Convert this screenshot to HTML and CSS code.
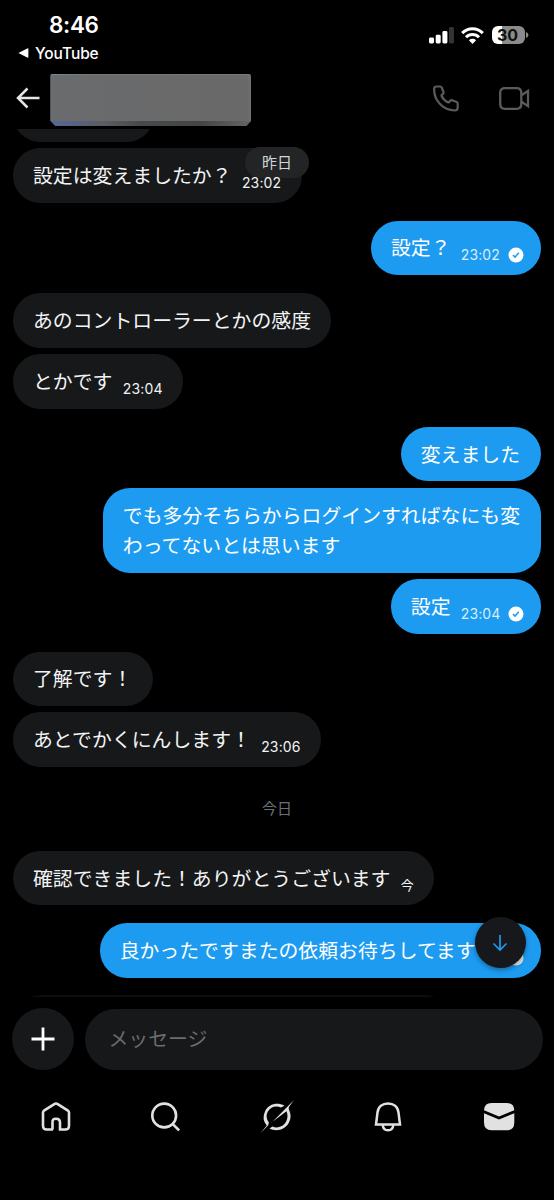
FILE: index.html
```html
<!DOCTYPE html>
<html lang="ja">
<head>
<meta charset="utf-8">
<title>メッセージ</title>
<link rel="stylesheet" href="styles.css">
</head>
<body>
<div class="screen">
  <div class="status">
    <div class="status-left">
      <div class="clock">8:46</div>
      <div class="back-app"><svg width="11" height="10" viewBox="0 0 11 10"><path d="M.4 5 9.2.5Q10.4 0 10.4 1.200v7.600Q10.400 10 9.200 9.500z" fill="#fff"/></svg><span>YouTube</span></div>
    </div>
    <div class="status-right">
      <svg class="signal" width="25" height="17" viewBox="0 0 25 17"><g fill="#fff"><rect x="0" y="10.500" width="5" height="6" rx="1.400"/><rect x="6.700" y="7.700" width="5" height="8.800" rx="1.400"/><rect x="13.400" y="4" width="5" height="12.500" rx="1.400"/></g><rect x="20" y="0" width="5" height="16.500" rx="1.400" fill="#333"/></svg>
      <svg class="wifi" width="23" height="17" viewBox="0 0 23 17"><g fill="none" stroke="#fff" stroke-width="3"><path d="M1.200 6.100a14.600 14.600 0 0 1 20.600 0"/><path d="M5 10.300a9.200 9.200 0 0 1 13 0"/></g><path d="M11.500 17 7.900 13.300a5.100 5.100 0 0 1 7.200 0z" fill="#fff"/></svg>
      <div class="battery"><span>30</span></div>
      <svg class="battery-tip" width="3" height="6" viewBox="0 0 3 6"><path d="M0 0Q2.500 1 2.500 3T0 6z" fill="#8b8b8b"/></svg>
    </div>
  </div>

  <header class="header">
    <svg class="back" width="24" height="22" viewBox="0 0 24 22"><path d="M11.500 1.500 2 11l9.500 9.500M2 11h21.500" fill="none" stroke="#e4e5e6" stroke-width="2.500"/></svg>
    <div class="name-mask"></div>
    <svg class="phone" width="26" height="27" viewBox="0 0 26 27"><path d="M3.100 1.500H7.200Q8.300 1.500 8.700 2.500L10.500 7Q10.900 8.200 10 9L8.600 10.200Q8.400 10.500 8.600 11C9.800 13.800 12.200 16.100 15.200 17.400Q15.700 17.500 16 17.200L17.200 15.700Q18 14.900 19.100 15.300L23.700 17.100Q24.700 17.600 24.700 18.700V22.500Q24.600 25.500 21.700 25.500C10 25.100 1.100 16 1.100 4Q1.100 1.800 3.100 1.500Z" fill="none" stroke="#5b5b5b" stroke-width="2.200" stroke-linejoin="round"/></svg>
    <svg class="video" width="31" height="23" viewBox="0 0 31 23"><path d="M6 1.200H17.500Q22.300 1.200 22.300 6V17Q22.300 21.800 17.500 21.800H6Q1.200 21.800 1.200 17V6Q1.200 1.200 6 1.200ZM22.500 8.300 29 3.900V19.100L22.500 14.700" fill="none" stroke="#5b5b5b" stroke-width="2.300"/></svg>
  </header>

  <main class="chat">
    <div class="bubble in earlier"></div>
    <div class="bubble in dated"><p>設定は変えましたか？</p><time>23:02</time><span class="date-pill">昨日</span></div>
    <div class="bubble out turn"><p>設定？</p><time>23:02</time><svg class="check" viewBox="0 0 16 16"><circle cx="8" cy="8" r="7.500" fill="#fff"/><path d="m5 8.100 2.100 2 3.700-4.300" fill="none" stroke="#1d9bf0" stroke-width="1.500"/></svg></div>
    <div class="bubble in turn"><p>あのコントローラーとかの感度</p></div>
    <div class="bubble in"><p>とかです</p><time>23:04</time></div>
    <div class="bubble out turn"><p>変えました</p></div>
    <div class="bubble out"><p>でも多分そちらからログインすればなにも変<br>わってないとは思います</p></div>
    <div class="bubble out"><p>設定</p><time>23:04</time><svg class="check" viewBox="0 0 16 16"><circle cx="8" cy="8" r="7.500" fill="#fff"/><path d="m5 8.100 2.100 2 3.700-4.300" fill="none" stroke="#1d9bf0" stroke-width="1.500"/></svg></div>
    <div class="bubble in turn"><p>了解です！</p></div>
    <div class="bubble in"><p>あとでかくにんします！</p><time>23:06</time></div>
    <div class="day">今日</div>
    <div class="bubble in"><p>確認できました！ありがとうございます</p><time class="now">今</time></div>
    <div class="bubble out turn last"><p>良かったですまたの依頼お待ちしてます</p><svg class="check" viewBox="0 0 16 16"><circle cx="8" cy="8" r="7.500" fill="#e6e9ea"/></svg>
      <div class="jump"><svg width="16" height="18" viewBox="0 0 16 18"><path d="M8 1v15M1.500 9.500 8 16l6.500-6.500" fill="none" stroke="#1d9bf0" stroke-width="1.700"/></svg></div>
    </div>
    <div class="bubble in next"></div>
  </main>

  <div class="composer">
    <div class="plus"><svg width="24" height="24" viewBox="0 0 24 24"><path d="M12 .5v23M.5 12h23" stroke="#fff" stroke-width="2.800"/></svg></div>
    <div class="field">メッセージ</div>
  </div>

  <nav class="tabs">
    <svg width="34" height="34" viewBox="0 0 34 34"><path d="M14 29.500H7.800Q4 29.500 4 25.700V12.600Q4 11.400 5 10.700L15.300 4.100Q17 3 18.700 4.100L29 10.700Q30 11.400 30 12.600V25.700Q30 29.500 26.200 29.500H21V22.500Q21 18.700 17 18.700T13.500 22.500V29.500" fill="none" stroke="#e1e1e1" stroke-width="2.600"/></svg>
    <svg width="34" height="34" viewBox="0 0 34 34"><circle cx="15.200" cy="15.500" r="11.900" fill="none" stroke="#e1e1e1" stroke-width="2.600"/><path d="m23.800 24.100 6.300 6.300" stroke="#e1e1e1" stroke-width="2.700"/></svg>
    <svg width="34" height="34" viewBox="0 0 34 34"><g fill="#e1e1e1"><path d="M.2 33.600 6.700 25.500Q1.400 19 5 11.400C8.500 3.900 17.200 1.800 24.500 5.700L20.900 7.400C15.500 5.100 10 7 7.600 12Q5 17.700 8.900 22.600L8.200 25.300z"/><path d="M33.800.3 12.500 21.700 26.500 11.300C29.600 18.100 25.400 27.100 17 27.400 15.200 27.400 13.700 27.200 12.400 26.600L9.500 28.500C16.200 32 24.900 29.900 28.700 23 31.100 18.500 31.300 14.500 29 9.700 28.500 7.900 28.800 7.200 29.300 6.400z"/></g></svg>
    <svg width="34" height="34" viewBox="0 0 34 34"><path d="M5 24.500 6.500 12.500C7.200 6.500 11.500 3.400 17 3.400S26.800 6.500 27.500 12.500L29 24.500ZM11.700 25C12 28.500 14 30.300 17 30.300S22 28.500 22.300 25" fill="none" stroke="#e1e1e1" stroke-width="2.500"/></svg>
    <svg width="34" height="34" viewBox="0 0 34 34"><g fill="#e1e1e1"><path d="M2 10.300Q2.300 3 9.500 3H25Q32 3 32.300 10.300L17 16.500z"/><path d="M2 13.200 17 19.600 32.300 13.200V22.500Q32.300 30.300 25 30.300H9.500Q2 30.300 2 22.500z"/></g></svg>
  </nav>
</div>
</body>
</html>
```
FILE: styles.css
```css
* { box-sizing: border-box; }
body { margin: 0; background: #000; }
p { margin: 0; }
svg { display: block; flex: none; }

.screen {
  display: flex;
  flex-direction: column;
  width: 554px;
  height: 1200px;
  overflow: hidden;
  background: #000;
  color: #f2f3f4;
  font-family: Inter, "Noto Sans CJK JP", sans-serif;
}

.status {
  display: flex;
  justify-content: space-between;
  height: 66px;
  padding: 12px 25px 0 18px;
  color: #fff;
}
.clock {
  padding-left: 31px;
  font-size: 22.500px;
  font-weight: 600;
  line-height: 26px;
  letter-spacing: -0.350px;
}
.back-app {
  display: flex;
  align-items: center;
  gap: 6px;
  height: 20px;
  margin-top: 5px;
  font-size: 15.500px;
  font-weight: 500;
  letter-spacing: -0.100px;
}
.status-right {
  display: flex;
  align-items: center;
  height: 18px;
  margin-top: 14px;
}
.signal { margin-right: 7px; }
.wifi { margin-right: 8px; }
.battery {
  width: 33px;
  height: 18px;
  border-radius: 6px;
  background: linear-gradient(90deg, #fff 10px, #8b8b8b 10px);
  color: #111;
  font-size: 16px;
  font-weight: 700;
  line-height: 18px;
  text-align: center;
  padding-right: 2px;
}
.battery-tip { margin-left: 1px; }

.header {
  display: flex;
  align-items: center;
  height: 63px;
  padding: 1px 24px 0 16px;
}
.name-mask {
  width: 201px;
  height: 52.500px;
  margin-left: 10.300px;
  margin-right: 181.700px;
  margin-top: 4px;
  border-radius: 2px;
  background:
    linear-gradient(90deg, #55669b, #5a5c62 28%, #48494b 45%, #444546 75%, #646566) 0 100% / 100% 5px no-repeat,
    linear-gradient(90deg, #7185ac, #747679 18%, #77787a) 0 0 / 100% 1px no-repeat,
    linear-gradient(90deg, #71798d, #6a6b6c 2px, #69696a 98%, #707172);
  clip-path: polygon(0 0, 100% 0, 100% 47px, 196px 100%, 5px 100%, 0 47px);
}
.video { margin-left: 40px; }

.chat {
  display: flex;
  flex-direction: column;
  align-items: flex-start;
  height: 868px;
  padding: 0 13px;
  overflow: hidden;
}
.bubble {
  display: flex;
  flex: none;
  align-items: flex-end;
  min-height: 54.600px;
  margin-top: 6.400px;
  padding: 12.200px 20.300px;
  border-radius: 27.300px;
  font-size: 19.870px;
  line-height: 30.200px;
}
.bubble p { margin: 0.600px 0 -0.600px -0.300px; }
.in { background: #16181a; }
.out { align-self: flex-end; background: #1d9bf0; color: #fff; }
.out p { margin-left: -0.500px; padding-right: 0.700px; }
.turn { margin-top: 18px; }
.earlier { width: 141px; margin-top: -42px; }
.next { width: 439px; margin-top: 17.400px; background: #0c0d0e; }
.dated { position: relative; }
time {
  position: relative;
  z-index: 1;
  margin-left: 10.300px;
  margin-bottom: -2.500px;
  width: 39.500px;
  font-size: 14px;
  line-height: 20px;
  letter-spacing: 0.150px;
  white-space: nowrap;
}
.now { width: 13.300px; font-size: 13px; letter-spacing: 0; margin-bottom: -1.500px; }
.out time { color: #d8eefc; margin-left: 9.500px; }
.check { width: 16px; height: 16px; margin: 0 -3px -0.500px 7.500px; }
.date-pill {
  position: absolute;
  top: -1px;
  left: 232px;
  width: 64px;
  height: 31px;
  border-radius: 16px;
  background: #222426;
  color: #d4d5d6;
  font-size: 15px;
  line-height: 31px;
  text-align: center;
}
.day {
  align-self: center;
  height: 83.800px;
  flex: none;
  margin-bottom: -6.400px;
  color: #6c7074;
  font-size: 15px;
  line-height: 84.800px;
}
.last { position: relative; }
.last .check { margin-left: 31.500px; }
.jump {
  position: absolute;
  top: -6px;
  right: 15.500px;
  display: flex;
  align-items: center;
  justify-content: center;
  width: 51px;
  height: 51px;
  border-radius: 50%;
  background: #16181b;
  box-shadow: 0 2px 5px rgba(0, 0, 0, 0.350);
}

.composer {
  display: flex;
  align-items: center;
  gap: 11.500px;
  height: 84px;
  padding: 0 11.500px 0 11.500px;
}
.plus {
  display: flex;
  align-items: center;
  justify-content: center;
  width: 62px;
  height: 62px;
  border-radius: 50%;
  background: #16181a;
}
.field {
  flex: 1;
  height: 61px;
  margin-top: 1px;
  padding-left: 23.500px;
  border-radius: 31px;
  background: #16181a;
  color: #6b6d70;
  font-size: 19.870px;
  line-height: 61px;
}

.tabs {
  display: flex;
  justify-content: space-between;
  margin-top: 18.500px;
  padding: 0 38.500px;
}
```
